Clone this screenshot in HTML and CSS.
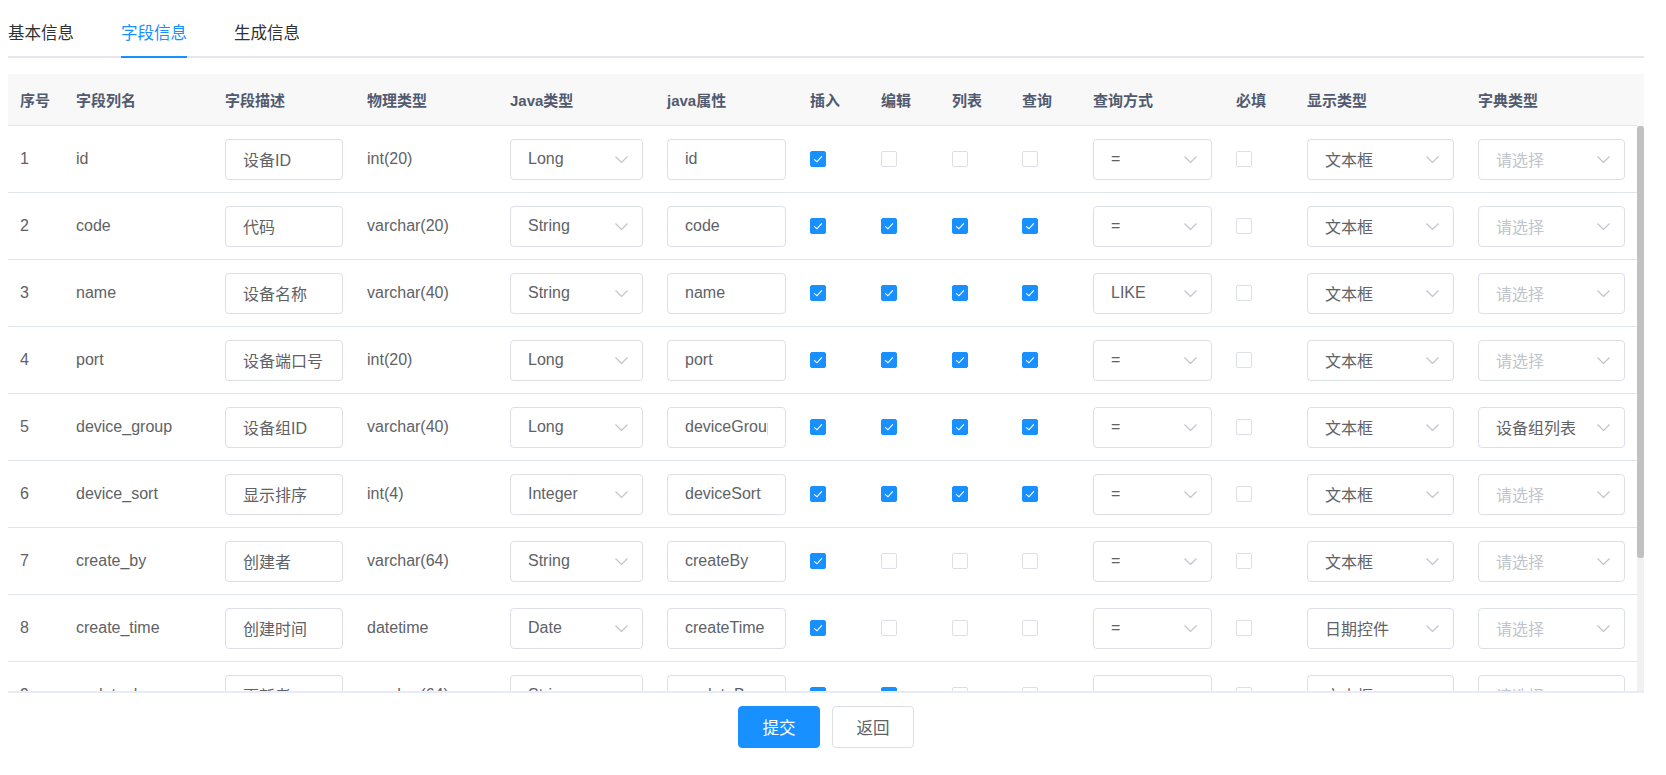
FILE: index.html
```html
<!DOCTYPE html>
<html lang="zh-CN">
<head>
<meta charset="utf-8">
<title>修改生成配置</title>
<link rel="stylesheet" href="styles.css">
</head>
<body>
<div class="page">
  <div class="tabs">
    <div class="tab">基本信息</div>
    <div class="tab active">字段信息</div>
    <div class="tab">生成信息</div>
  </div>

  <div class="table">
    <div class="thead">
      <div class="grid hrow">
        <div class="th">序号</div>
        <div class="th">字段列名</div>
        <div class="th">字段描述</div>
        <div class="th">物理类型</div>
        <div class="th">Java类型</div>
        <div class="th">java属性</div>
        <div class="th">插入</div>
        <div class="th">编辑</div>
        <div class="th">列表</div>
        <div class="th">查询</div>
        <div class="th">查询方式</div>
        <div class="th">必填</div>
        <div class="th">显示类型</div>
        <div class="th">字典类型</div>
      </div>
      <div class="gutter"></div>
    </div>

    <div class="tbody-wrap">
      <div class="tbody">
        <!-- 1 -->
        <div class="grid row">
          <div class="td">1</div>
          <div class="td">id</div>
          <div class="td"><div class="inp"><span>设备ID</span></div></div>
          <div class="td">int(20)</div>
          <div class="td"><div class="sel"><span>Long</span><svg class="arr" viewBox="0 0 13 7"><polyline points="0.5,0.5 6.5,6.5 12.5,0.5"/></svg></div></div>
          <div class="td"><div class="inp"><span>id</span></div></div>
          <div class="td"><span class="cb on"><svg viewBox="0 0 16 16"><polyline points="3.6,8.4 6.8,11.2 12.4,5"/></svg></span></div>
          <div class="td"><span class="cb"></span></div>
          <div class="td"><span class="cb"></span></div>
          <div class="td"><span class="cb"></span></div>
          <div class="td"><div class="sel"><span>=</span><svg class="arr" viewBox="0 0 13 7"><polyline points="0.5,0.5 6.5,6.5 12.5,0.5"/></svg></div></div>
          <div class="td"><span class="cb"></span></div>
          <div class="td"><div class="sel"><span>文本框</span><svg class="arr" viewBox="0 0 13 7"><polyline points="0.5,0.5 6.5,6.5 12.5,0.5"/></svg></div></div>
          <div class="td"><div class="sel"><span class="ph">请选择</span><svg class="arr" viewBox="0 0 13 7"><polyline points="0.5,0.5 6.5,6.5 12.5,0.5"/></svg></div></div>
        </div>
        <!-- 2 -->
        <div class="grid row">
          <div class="td">2</div>
          <div class="td">code</div>
          <div class="td"><div class="inp"><span>代码</span></div></div>
          <div class="td">varchar(20)</div>
          <div class="td"><div class="sel"><span>String</span><svg class="arr" viewBox="0 0 13 7"><polyline points="0.5,0.5 6.5,6.5 12.5,0.5"/></svg></div></div>
          <div class="td"><div class="inp"><span>code</span></div></div>
          <div class="td"><span class="cb on"><svg viewBox="0 0 16 16"><polyline points="3.6,8.4 6.8,11.2 12.4,5"/></svg></span></div>
          <div class="td"><span class="cb on"><svg viewBox="0 0 16 16"><polyline points="3.6,8.4 6.8,11.2 12.4,5"/></svg></span></div>
          <div class="td"><span class="cb on"><svg viewBox="0 0 16 16"><polyline points="3.6,8.4 6.8,11.2 12.4,5"/></svg></span></div>
          <div class="td"><span class="cb on"><svg viewBox="0 0 16 16"><polyline points="3.6,8.4 6.8,11.2 12.4,5"/></svg></span></div>
          <div class="td"><div class="sel"><span>=</span><svg class="arr" viewBox="0 0 13 7"><polyline points="0.5,0.5 6.5,6.5 12.5,0.5"/></svg></div></div>
          <div class="td"><span class="cb"></span></div>
          <div class="td"><div class="sel"><span>文本框</span><svg class="arr" viewBox="0 0 13 7"><polyline points="0.5,0.5 6.5,6.5 12.5,0.5"/></svg></div></div>
          <div class="td"><div class="sel"><span class="ph">请选择</span><svg class="arr" viewBox="0 0 13 7"><polyline points="0.5,0.5 6.5,6.5 12.5,0.5"/></svg></div></div>
        </div>
        <!-- 3 -->
        <div class="grid row">
          <div class="td">3</div>
          <div class="td">name</div>
          <div class="td"><div class="inp"><span>设备名称</span></div></div>
          <div class="td">varchar(40)</div>
          <div class="td"><div class="sel"><span>String</span><svg class="arr" viewBox="0 0 13 7"><polyline points="0.5,0.5 6.5,6.5 12.5,0.5"/></svg></div></div>
          <div class="td"><div class="inp"><span>name</span></div></div>
          <div class="td"><span class="cb on"><svg viewBox="0 0 16 16"><polyline points="3.6,8.4 6.8,11.2 12.4,5"/></svg></span></div>
          <div class="td"><span class="cb on"><svg viewBox="0 0 16 16"><polyline points="3.6,8.4 6.8,11.2 12.4,5"/></svg></span></div>
          <div class="td"><span class="cb on"><svg viewBox="0 0 16 16"><polyline points="3.6,8.4 6.8,11.2 12.4,5"/></svg></span></div>
          <div class="td"><span class="cb on"><svg viewBox="0 0 16 16"><polyline points="3.6,8.4 6.8,11.2 12.4,5"/></svg></span></div>
          <div class="td"><div class="sel"><span>LIKE</span><svg class="arr" viewBox="0 0 13 7"><polyline points="0.5,0.5 6.5,6.5 12.5,0.5"/></svg></div></div>
          <div class="td"><span class="cb"></span></div>
          <div class="td"><div class="sel"><span>文本框</span><svg class="arr" viewBox="0 0 13 7"><polyline points="0.5,0.5 6.5,6.5 12.5,0.5"/></svg></div></div>
          <div class="td"><div class="sel"><span class="ph">请选择</span><svg class="arr" viewBox="0 0 13 7"><polyline points="0.5,0.5 6.5,6.5 12.5,0.5"/></svg></div></div>
        </div>
        <!-- 4 -->
        <div class="grid row">
          <div class="td">4</div>
          <div class="td">port</div>
          <div class="td"><div class="inp"><span>设备端口号</span></div></div>
          <div class="td">int(20)</div>
          <div class="td"><div class="sel"><span>Long</span><svg class="arr" viewBox="0 0 13 7"><polyline points="0.5,0.5 6.5,6.5 12.5,0.5"/></svg></div></div>
          <div class="td"><div class="inp"><span>port</span></div></div>
          <div class="td"><span class="cb on"><svg viewBox="0 0 16 16"><polyline points="3.6,8.4 6.8,11.2 12.4,5"/></svg></span></div>
          <div class="td"><span class="cb on"><svg viewBox="0 0 16 16"><polyline points="3.6,8.4 6.8,11.2 12.4,5"/></svg></span></div>
          <div class="td"><span class="cb on"><svg viewBox="0 0 16 16"><polyline points="3.6,8.4 6.8,11.2 12.4,5"/></svg></span></div>
          <div class="td"><span class="cb on"><svg viewBox="0 0 16 16"><polyline points="3.6,8.4 6.8,11.2 12.4,5"/></svg></span></div>
          <div class="td"><div class="sel"><span>=</span><svg class="arr" viewBox="0 0 13 7"><polyline points="0.5,0.5 6.5,6.5 12.5,0.5"/></svg></div></div>
          <div class="td"><span class="cb"></span></div>
          <div class="td"><div class="sel"><span>文本框</span><svg class="arr" viewBox="0 0 13 7"><polyline points="0.5,0.5 6.5,6.5 12.5,0.5"/></svg></div></div>
          <div class="td"><div class="sel"><span class="ph">请选择</span><svg class="arr" viewBox="0 0 13 7"><polyline points="0.5,0.5 6.5,6.5 12.5,0.5"/></svg></div></div>
        </div>
        <!-- 5 -->
        <div class="grid row">
          <div class="td">5</div>
          <div class="td">device_group</div>
          <div class="td"><div class="inp"><span>设备组ID</span></div></div>
          <div class="td">varchar(40)</div>
          <div class="td"><div class="sel"><span>Long</span><svg class="arr" viewBox="0 0 13 7"><polyline points="0.5,0.5 6.5,6.5 12.5,0.5"/></svg></div></div>
          <div class="td"><div class="inp"><span>deviceGroup</span></div></div>
          <div class="td"><span class="cb on"><svg viewBox="0 0 16 16"><polyline points="3.6,8.4 6.8,11.2 12.4,5"/></svg></span></div>
          <div class="td"><span class="cb on"><svg viewBox="0 0 16 16"><polyline points="3.6,8.4 6.8,11.2 12.4,5"/></svg></span></div>
          <div class="td"><span class="cb on"><svg viewBox="0 0 16 16"><polyline points="3.6,8.4 6.8,11.2 12.4,5"/></svg></span></div>
          <div class="td"><span class="cb on"><svg viewBox="0 0 16 16"><polyline points="3.6,8.4 6.8,11.2 12.4,5"/></svg></span></div>
          <div class="td"><div class="sel"><span>=</span><svg class="arr" viewBox="0 0 13 7"><polyline points="0.5,0.5 6.5,6.5 12.5,0.5"/></svg></div></div>
          <div class="td"><span class="cb"></span></div>
          <div class="td"><div class="sel"><span>文本框</span><svg class="arr" viewBox="0 0 13 7"><polyline points="0.5,0.5 6.5,6.5 12.5,0.5"/></svg></div></div>
          <div class="td"><div class="sel"><span>设备组列表</span><svg class="arr" viewBox="0 0 13 7"><polyline points="0.5,0.5 6.5,6.5 12.5,0.5"/></svg></div></div>
        </div>
        <!-- 6 -->
        <div class="grid row">
          <div class="td">6</div>
          <div class="td">device_sort</div>
          <div class="td"><div class="inp"><span>显示排序</span></div></div>
          <div class="td">int(4)</div>
          <div class="td"><div class="sel"><span>Integer</span><svg class="arr" viewBox="0 0 13 7"><polyline points="0.5,0.5 6.5,6.5 12.5,0.5"/></svg></div></div>
          <div class="td"><div class="inp"><span>deviceSort</span></div></div>
          <div class="td"><span class="cb on"><svg viewBox="0 0 16 16"><polyline points="3.6,8.4 6.8,11.2 12.4,5"/></svg></span></div>
          <div class="td"><span class="cb on"><svg viewBox="0 0 16 16"><polyline points="3.6,8.4 6.8,11.2 12.4,5"/></svg></span></div>
          <div class="td"><span class="cb on"><svg viewBox="0 0 16 16"><polyline points="3.6,8.4 6.8,11.2 12.4,5"/></svg></span></div>
          <div class="td"><span class="cb on"><svg viewBox="0 0 16 16"><polyline points="3.6,8.4 6.8,11.2 12.4,5"/></svg></span></div>
          <div class="td"><div class="sel"><span>=</span><svg class="arr" viewBox="0 0 13 7"><polyline points="0.5,0.5 6.5,6.5 12.5,0.5"/></svg></div></div>
          <div class="td"><span class="cb"></span></div>
          <div class="td"><div class="sel"><span>文本框</span><svg class="arr" viewBox="0 0 13 7"><polyline points="0.5,0.5 6.5,6.5 12.5,0.5"/></svg></div></div>
          <div class="td"><div class="sel"><span class="ph">请选择</span><svg class="arr" viewBox="0 0 13 7"><polyline points="0.5,0.5 6.5,6.5 12.5,0.5"/></svg></div></div>
        </div>
        <!-- 7 -->
        <div class="grid row">
          <div class="td">7</div>
          <div class="td">create_by</div>
          <div class="td"><div class="inp"><span>创建者</span></div></div>
          <div class="td">varchar(64)</div>
          <div class="td"><div class="sel"><span>String</span><svg class="arr" viewBox="0 0 13 7"><polyline points="0.5,0.5 6.5,6.5 12.5,0.5"/></svg></div></div>
          <div class="td"><div class="inp"><span>createBy</span></div></div>
          <div class="td"><span class="cb on"><svg viewBox="0 0 16 16"><polyline points="3.6,8.4 6.8,11.2 12.4,5"/></svg></span></div>
          <div class="td"><span class="cb"></span></div>
          <div class="td"><span class="cb"></span></div>
          <div class="td"><span class="cb"></span></div>
          <div class="td"><div class="sel"><span>=</span><svg class="arr" viewBox="0 0 13 7"><polyline points="0.5,0.5 6.5,6.5 12.5,0.5"/></svg></div></div>
          <div class="td"><span class="cb"></span></div>
          <div class="td"><div class="sel"><span>文本框</span><svg class="arr" viewBox="0 0 13 7"><polyline points="0.5,0.5 6.5,6.5 12.5,0.5"/></svg></div></div>
          <div class="td"><div class="sel"><span class="ph">请选择</span><svg class="arr" viewBox="0 0 13 7"><polyline points="0.5,0.5 6.5,6.5 12.5,0.5"/></svg></div></div>
        </div>
        <!-- 8 -->
        <div class="grid row">
          <div class="td">8</div>
          <div class="td">create_time</div>
          <div class="td"><div class="inp"><span>创建时间</span></div></div>
          <div class="td">datetime</div>
          <div class="td"><div class="sel"><span>Date</span><svg class="arr" viewBox="0 0 13 7"><polyline points="0.5,0.5 6.5,6.5 12.5,0.5"/></svg></div></div>
          <div class="td"><div class="inp"><span>createTime</span></div></div>
          <div class="td"><span class="cb on"><svg viewBox="0 0 16 16"><polyline points="3.6,8.4 6.8,11.2 12.4,5"/></svg></span></div>
          <div class="td"><span class="cb"></span></div>
          <div class="td"><span class="cb"></span></div>
          <div class="td"><span class="cb"></span></div>
          <div class="td"><div class="sel"><span>=</span><svg class="arr" viewBox="0 0 13 7"><polyline points="0.5,0.5 6.5,6.5 12.5,0.5"/></svg></div></div>
          <div class="td"><span class="cb"></span></div>
          <div class="td"><div class="sel"><span>日期控件</span><svg class="arr" viewBox="0 0 13 7"><polyline points="0.5,0.5 6.5,6.5 12.5,0.5"/></svg></div></div>
          <div class="td"><div class="sel"><span class="ph">请选择</span><svg class="arr" viewBox="0 0 13 7"><polyline points="0.5,0.5 6.5,6.5 12.5,0.5"/></svg></div></div>
        </div>
        <!-- 9 -->
        <div class="grid row">
          <div class="td">9</div>
          <div class="td">update_by</div>
          <div class="td"><div class="inp"><span>更新者</span></div></div>
          <div class="td">varchar(64)</div>
          <div class="td"><div class="sel"><span>String</span><svg class="arr" viewBox="0 0 13 7"><polyline points="0.5,0.5 6.5,6.5 12.5,0.5"/></svg></div></div>
          <div class="td"><div class="inp"><span>updateBy</span></div></div>
          <div class="td"><span class="cb on"><svg viewBox="0 0 16 16"><polyline points="3.6,8.4 6.8,11.2 12.4,5"/></svg></span></div>
          <div class="td"><span class="cb on"><svg viewBox="0 0 16 16"><polyline points="3.6,8.4 6.8,11.2 12.4,5"/></svg></span></div>
          <div class="td"><span class="cb"></span></div>
          <div class="td"><span class="cb"></span></div>
          <div class="td"><div class="sel"><span>=</span><svg class="arr" viewBox="0 0 13 7"><polyline points="0.5,0.5 6.5,6.5 12.5,0.5"/></svg></div></div>
          <div class="td"><span class="cb"></span></div>
          <div class="td"><div class="sel"><span>文本框</span><svg class="arr" viewBox="0 0 13 7"><polyline points="0.5,0.5 6.5,6.5 12.5,0.5"/></svg></div></div>
          <div class="td"><div class="sel"><span class="ph">请选择</span><svg class="arr" viewBox="0 0 13 7"><polyline points="0.5,0.5 6.5,6.5 12.5,0.5"/></svg></div></div>
        </div>
        <!-- 10 -->
        <div class="grid row">
          <div class="td">10</div>
          <div class="td">update_time</div>
          <div class="td"><div class="inp"><span>更新时间</span></div></div>
          <div class="td">datetime</div>
          <div class="td"><div class="sel"><span>Date</span><svg class="arr" viewBox="0 0 13 7"><polyline points="0.5,0.5 6.5,6.5 12.5,0.5"/></svg></div></div>
          <div class="td"><div class="inp"><span>updateTime</span></div></div>
          <div class="td"><span class="cb on"><svg viewBox="0 0 16 16"><polyline points="3.6,8.4 6.8,11.2 12.4,5"/></svg></span></div>
          <div class="td"><span class="cb on"><svg viewBox="0 0 16 16"><polyline points="3.6,8.4 6.8,11.2 12.4,5"/></svg></span></div>
          <div class="td"><span class="cb"></span></div>
          <div class="td"><span class="cb"></span></div>
          <div class="td"><div class="sel"><span>=</span><svg class="arr" viewBox="0 0 13 7"><polyline points="0.5,0.5 6.5,6.5 12.5,0.5"/></svg></div></div>
          <div class="td"><span class="cb"></span></div>
          <div class="td"><div class="sel"><span>日期控件</span><svg class="arr" viewBox="0 0 13 7"><polyline points="0.5,0.5 6.5,6.5 12.5,0.5"/></svg></div></div>
          <div class="td"><div class="sel"><span class="ph">请选择</span><svg class="arr" viewBox="0 0 13 7"><polyline points="0.5,0.5 6.5,6.5 12.5,0.5"/></svg></div></div>
        </div>
        <!-- 11 -->
        <div class="grid row">
          <div class="td">11</div>
          <div class="td">remark</div>
          <div class="td"><div class="inp"><span>备注</span></div></div>
          <div class="td">varchar(500)</div>
          <div class="td"><div class="sel"><span>String</span><svg class="arr" viewBox="0 0 13 7"><polyline points="0.5,0.5 6.5,6.5 12.5,0.5"/></svg></div></div>
          <div class="td"><div class="inp"><span>remark</span></div></div>
          <div class="td"><span class="cb on"><svg viewBox="0 0 16 16"><polyline points="3.6,8.4 6.8,11.2 12.4,5"/></svg></span></div>
          <div class="td"><span class="cb on"><svg viewBox="0 0 16 16"><polyline points="3.6,8.4 6.8,11.2 12.4,5"/></svg></span></div>
          <div class="td"><span class="cb on"><svg viewBox="0 0 16 16"><polyline points="3.6,8.4 6.8,11.2 12.4,5"/></svg></span></div>
          <div class="td"><span class="cb"></span></div>
          <div class="td"><div class="sel"><span>=</span><svg class="arr" viewBox="0 0 13 7"><polyline points="0.5,0.5 6.5,6.5 12.5,0.5"/></svg></div></div>
          <div class="td"><span class="cb"></span></div>
          <div class="td"><div class="sel"><span>文本域</span><svg class="arr" viewBox="0 0 13 7"><polyline points="0.5,0.5 6.5,6.5 12.5,0.5"/></svg></div></div>
          <div class="td"><div class="sel"><span class="ph">请选择</span><svg class="arr" viewBox="0 0 13 7"><polyline points="0.5,0.5 6.5,6.5 12.5,0.5"/></svg></div></div>
        </div>
      </div>
      <div class="scrollbar"><div class="thumb"></div></div>
    </div>
  </div>

  <div class="btns">
    <div class="btn primary">提交</div>
    <div class="btn">返回</div>
  </div>
</div>
</body>
</html>
```

FILE: styles.css
```css
html, body {
  margin: 0;
  padding: 0;
  background: #ffffff;
}

body {
  font-family: "Liberation Sans", "Noto Sans CJK SC", sans-serif;
  color: #606266;
}

.page {
  width: 1636px;
  margin-left: 8px;
  padding-top: 10px;
}

/* Tabs */
.tabs {
  display: flex;
  border-bottom: 2px solid #e4e7ed;
}

.tab {
  position: relative;
  height: 46px;
  line-height: 46px;
  padding: 0 23.5px;
  font-size: 16.5px;
  color: #303133;
  white-space: nowrap;
}

.tab:first-child {
  padding-left: 0;
}

.tab.active {
  color: #1890ff;
}

.tab.active::after {
  content: "";
  position: absolute;
  left: 23.5px;
  right: 23.5px;
  bottom: -2px;
  height: 2px;
  background: #1890ff;
}

/* Table */
.table {
  margin-top: 16px;
}

.grid {
  display: grid;
  grid-template-columns: 56px 149px 142px 143px 157px 143px 71px 71px 70px 71px 143px 71px 171px 171px;
  width: 1629px;
}

.thead {
  display: flex;
  background: #f8f8f9;
}

.hrow {
  height: 51px;
  border-bottom: 1px solid #dfe6ec;
}

.gutter {
  width: 7px;
  background: #f8f8f9;
}

.th {
  display: flex;
  align-items: center;
  padding: 0 12px;
  font-size: 15px;
  font-weight: bold;
  color: #515a6e;
  white-space: nowrap;
}

.tbody-wrap {
  display: flex;
  height: 565px;
  border-bottom: 2px solid #e6ebf5;
}

.tbody {
  width: 1629px;
  height: 565px;
  overflow: hidden;
}

.row {
  height: 66px;
  border-bottom: 1px solid #dfe6ec;
}

.td {
  display: flex;
  align-items: center;
  padding: 0 12px;
  min-width: 0;
  font-size: 16px;
  color: #606266;
  white-space: nowrap;
}

.scrollbar {
  width: 7px;
  background: #f1f1f1;
}

.thumb {
  height: 432px;
  background: #c1c1c1;
  border-radius: 3px;
}

/* Inputs */
.inp,
.sel {
  box-sizing: border-box;
  width: 100%;
  height: 41px;
  border: 1px solid #dcdfe6;
  border-radius: 4px;
  background: #ffffff;
  display: flex;
  align-items: center;
  font-size: 16px;
  color: #606266;
  white-space: nowrap;
}

.inp {
  padding: 0 17px;
}

.inp span {
  display: block;
  flex: 1;
  min-width: 0;
  overflow: hidden;
}

.sel {
  padding: 0 14px 0 17px;
  justify-content: space-between;
}

.sel span {
  overflow: hidden;
}

.arr {
  flex: none;
  width: 13px;
  height: 7px;
  fill: none;
  stroke: #c0c4cc;
  stroke-width: 1.2;
}

.ph {
  color: #c0c4cc;
}

/* Checkbox */
.cb {
  display: block;
  box-sizing: border-box;
  width: 16px;
  height: 16px;
  border: 1px solid #dcdfe6;
  border-radius: 2px;
  background: #ffffff;
}

.cb.on {
  background: #1890ff;
  border-color: #1890ff;
}

.cb svg {
  display: block;
  width: 14px;
  height: 14px;
  fill: none;
  stroke: #ffffff;
  stroke-width: 1.3;
}

/* Buttons */
.btns {
  display: flex;
  justify-content: center;
  gap: 12px;
  margin-top: 13px;
}

.btn {
  box-sizing: border-box;
  width: 82px;
  height: 42px;
  border: 1px solid #dcdfe6;
  border-radius: 4px;
  background: #ffffff;
  color: #606266;
  font-size: 16.5px;
  display: flex;
  align-items: center;
  justify-content: center;
}

.btn.primary {
  background: #1890ff;
  border-color: #1890ff;
  color: #ffffff;
}
```
